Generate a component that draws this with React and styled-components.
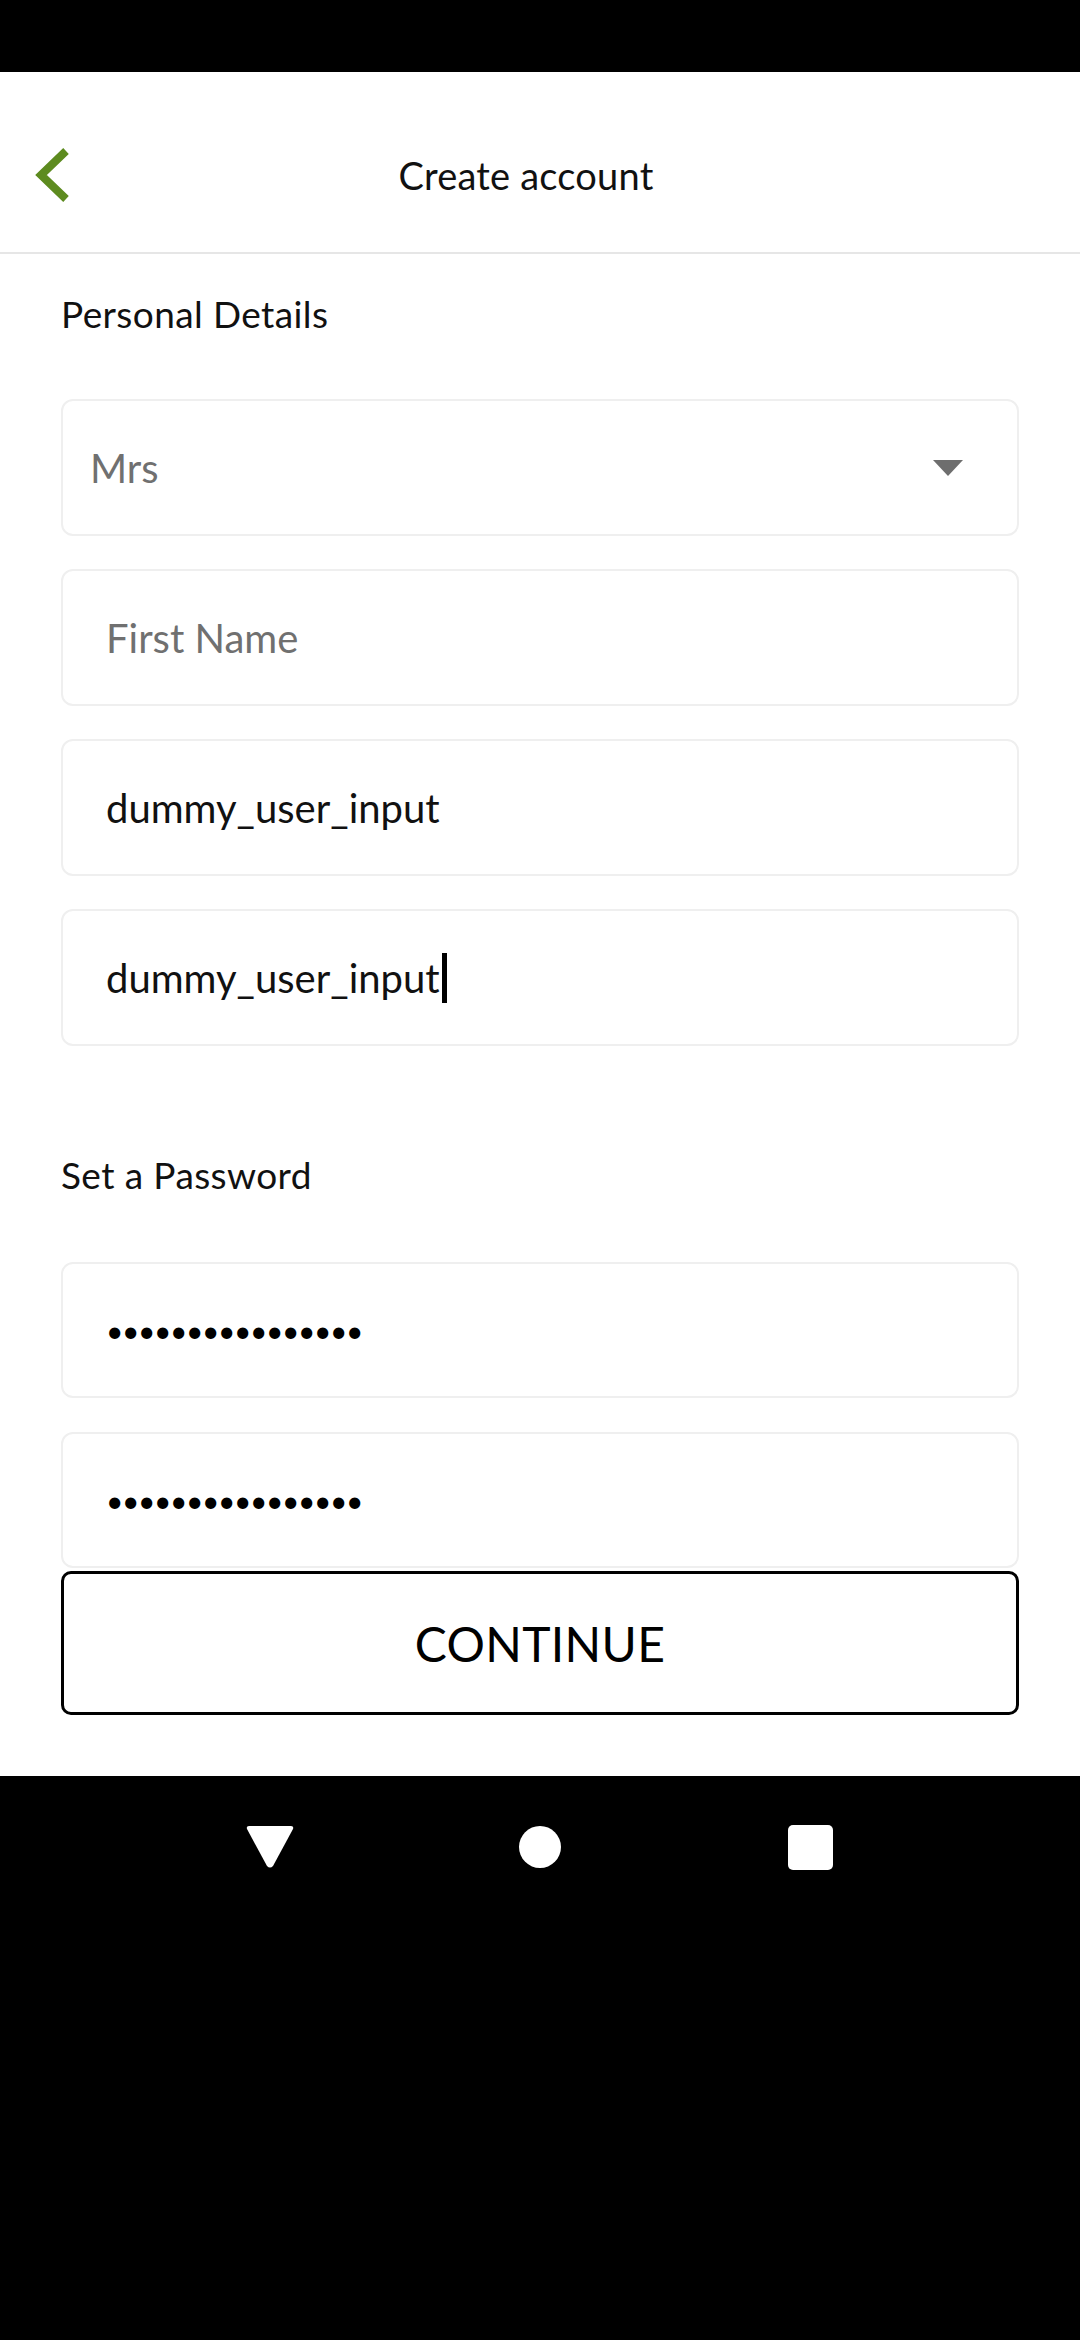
import React from "react";
import styled, { createGlobalStyle } from "styled-components";

const GlobalStyle = createGlobalStyle`
  html, body {
    margin: 0;
    padding: 0;
    background: #000;
  }
  * {
    box-sizing: border-box;
  }
  body {
    font-family: Lato, "Open Sans", sans-serif;
  }
`;

const StatusBar = styled.div`
  height: 72px;
  background: #000;
`;

const Screen = styled.div`
  background: #fff;
  height: 1704px;
  display: flex;
  flex-direction: column;
`;

const Header = styled.header`
  height: 182px;
  padding: 26px 28px 0 0;
  border-bottom: 2px solid #e6e6e6;
  display: grid;
  grid-template-columns: 1fr auto 1fr;
  align-items: center;
`;

const BackButton = styled.button`
  justify-self: start;
  margin-left: 32px;
  width: 40px;
  height: 56px;
  padding: 0;
  border: none;
  background: none;
  display: flex;
  align-items: center;
  justify-content: center;
`;

const Title = styled.h1`
  margin: 0;
  font-size: 38px;
  font-weight: 400;
  color: #111;
  letter-spacing: 0.2px;
`;

const Content = styled.main`
  padding: 0 61px;
  display: flex;
  flex-direction: column;
`;

const SectionTitle = styled.h2`
  margin: ${(p) => p.$top}px 0 ${(p) => p.$bottom}px;
  font-size: 37px;
  line-height: 44px;
  font-weight: 400;
  color: #111;
  letter-spacing: 0.4px;
`;

const Field = styled.div`
  height: ${(p) => (p.$tall ? 136 : 137)}px;
  margin-bottom: ${(p) => p.$gap ?? 33}px;
  border: 2px solid #efefef;
  border-radius: 12px;
  padding: 0 ${(p) => (p.$select ? 54 : 43)}px 0 ${(p) => (p.$select ? 27 : 43)}px;
  display: flex;
  align-items: center;
  justify-content: space-between;
  font-size: 40px;
  color: ${(p) => (p.$muted ? "#707070" : "#111")};
`;

const Value = styled.span`
  display: flex;
  align-items: center;
`;

const Caret = styled.span`
  display: inline-block;
  width: 5px;
  height: 50px;
  margin-left: 2px;
  background: #000;
`;

const Dots = styled.span`
  font-size: 30px;
  letter-spacing: -1.4px;
  color: #000;
`;

const ContinueButton = styled.button`
  height: 144px;
  border: 3px solid #000;
  border-radius: 10px;
  background: #fff;
  font-family: inherit;
  font-size: 48px;
  color: #000;
  letter-spacing: 0.3px;
`;

const NavBar = styled.nav`
  height: 142px;
  display: grid;
  grid-template-columns: repeat(3, 270px);
  justify-content: center;
  align-items: center;
`;

const NavItem = styled.div`
  display: flex;
  justify-content: center;
  align-items: center;
`;

const HomeDot = styled.div`
  width: 42px;
  height: 42px;
  border-radius: 50%;
  background: #fff;
`;

const RecentsSquare = styled.div`
  width: 45px;
  height: 45px;
  border-radius: 5px;
  background: #fff;
`;

function Chevron() {
  return (
    <svg width="36" height="54" viewBox="0 0 36 54">
      <polyline
        points="32,3 7,27 32,51"
        fill="none"
        stroke="#5d8b1f"
        strokeWidth="8"
        strokeLinejoin="miter"
      />
    </svg>
  );
}

function Arrow() {
  return (
    <svg width="30" height="16" viewBox="0 0 30 16">
      <polygon points="0,0 30,0 15,16" fill="#6e6e6e" />
    </svg>
  );
}

function BackTriangle() {
  return (
    <svg width="50" height="44" viewBox="0 0 50 44">
      <path
        d="M4 1 H46 Q49 1 48 4 L28 41 Q25 44 22 41 L2 4 Q1 1 4 1 Z"
        fill="#fff"
      />
    </svg>
  );
}

export default function App() {
  return (
    <>
      <GlobalStyle />
      <StatusBar />
      <Screen>
        <Header>
          <BackButton aria-label="Back">
            <Chevron />
          </BackButton>
          <Title>Create account</Title>
          <div />
        </Header>
        <Content>
          <SectionTitle $top={38} $bottom={63}>
            Personal Details
          </SectionTitle>
          <Field $select $muted>
            <span>Mrs</span>
            <Arrow />
          </Field>
          <Field $muted>First Name</Field>
          <Field>dummy_user_input</Field>
          <Field $gap={0}>
            <Value>
              dummy_user_input
              <Caret />
            </Value>
          </Field>
          <SectionTitle $top={107} $bottom={65}>
            Set a Password
          </SectionTitle>
          <Field $tall $gap={34}>
            <Dots>••••••••••••••••</Dots>
          </Field>
          <Field $tall $gap={3}>
            <Dots>••••••••••••••••</Dots>
          </Field>
          <ContinueButton>CONTINUE</ContinueButton>
        </Content>
      </Screen>
      <NavBar>
        <NavItem>
          <BackTriangle />
        </NavItem>
        <NavItem>
          <HomeDot />
        </NavItem>
        <NavItem>
          <RecentsSquare />
        </NavItem>
      </NavBar>
    </>
  );
}
